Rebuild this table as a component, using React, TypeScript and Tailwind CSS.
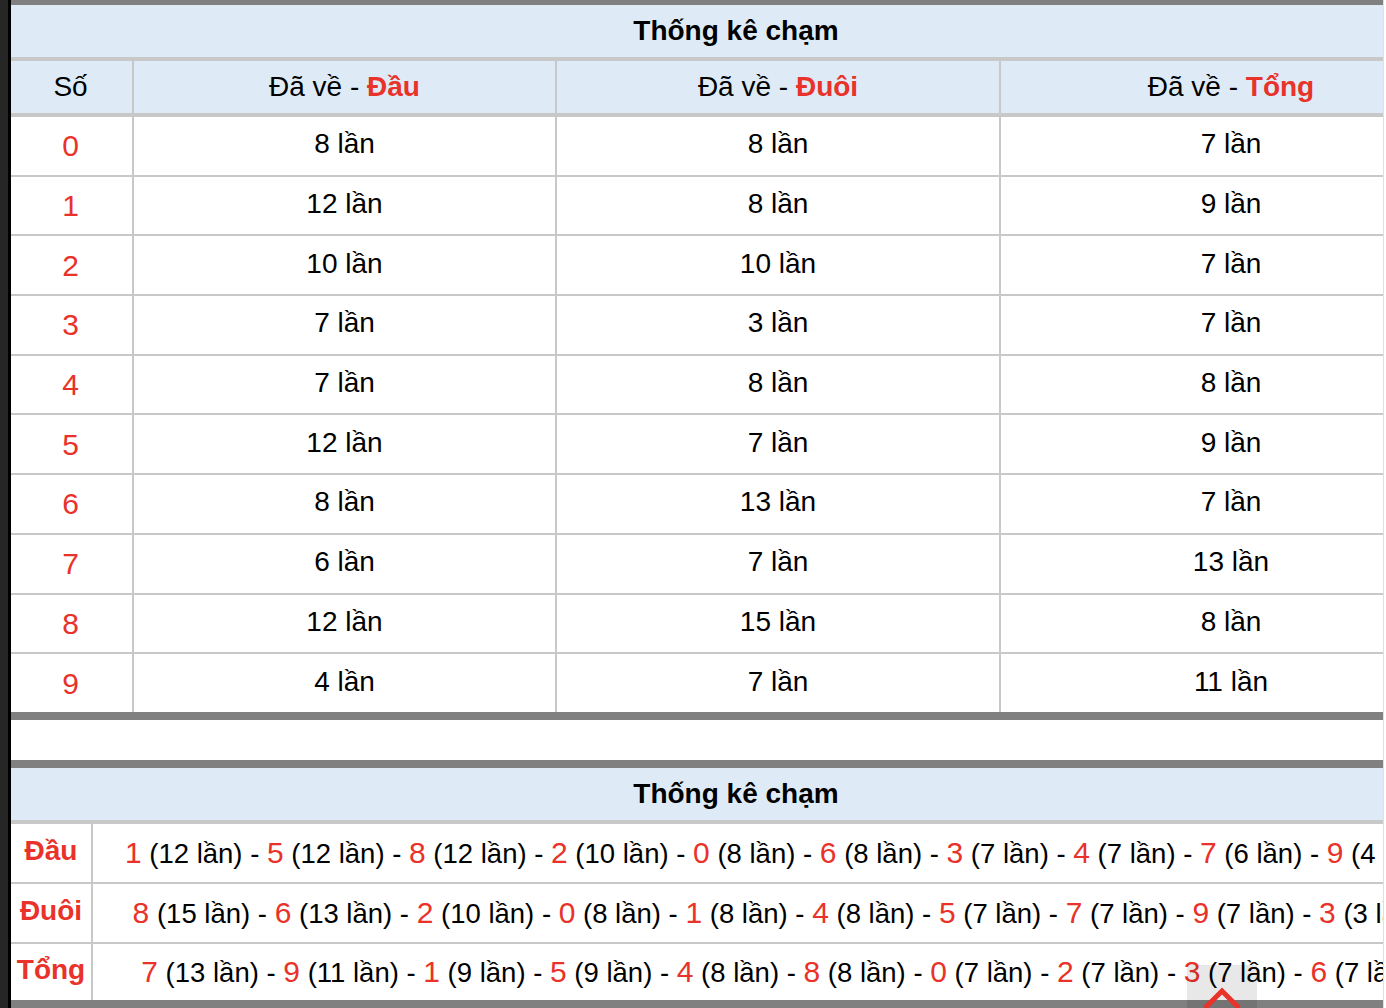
import React from "react";

const RED = "text-[#e8322a]";

const rows: [number, number, number, number][] = [
  [0, 8, 8, 7],
  [1, 12, 8, 9],
  [2, 10, 10, 7],
  [3, 7, 3, 7],
  [4, 7, 8, 8],
  [5, 12, 7, 9],
  [6, 8, 13, 7],
  [7, 6, 7, 13],
  [8, 12, 15, 8],
  [9, 4, 7, 11],
];

const summary: { label: string; items: [number, number][] }[] = [
  {
    label: "Đầu",
    items: [[1, 12], [5, 12], [8, 12], [2, 10], [0, 8], [6, 8], [3, 7], [4, 7], [7, 6], [9, 4]],
  },
  {
    label: "Đuôi",
    items: [[8, 15], [6, 13], [2, 10], [0, 8], [1, 8], [4, 8], [5, 7], [7, 7], [9, 7], [3, 3]],
  },
  {
    label: "Tổng",
    items: [[7, 13], [9, 11], [1, 9], [5, 9], [4, 8], [8, 8], [0, 7], [2, 7], [3, 7], [6, 7]],
  },
];

function Title() {
  return (
    <div className="h-[56px] bg-[#deebf7] border-b-[4px] border-[#c8c8c8] flex items-center justify-center font-bold text-[28px] text-black">
      Thống kê chạm
    </div>
  );
}

export default function App() {
  return (
    <div className="relative w-[1386px] h-[1008px] overflow-hidden flex bg-white font-['Liberation_Sans',Arial,Helvetica,sans-serif] text-black">
      <div className="w-[8px] h-full bg-[#262626] shrink-0" />
      <div className="w-[3px] h-full bg-black shrink-0" />
      <div className="w-[1372px] h-full overflow-hidden shrink-0">
        <div className="w-[1450px]">
          {/* Table 1 */}
          <div className="border-t-[5px] border-b-[8px] border-[#808080]">
            <Title />
            <div className="flex h-[56px] bg-[#deebf7] border-b-[4px] border-[#c8c8c8] text-[28px]">
              <div className="w-[123px] border-r-2 border-[#c8c8c8] flex items-center justify-center pr-[2px]">Số</div>
              <div className="w-[423px] border-r-2 border-[#c8c8c8] flex items-center justify-center">
                <span>
                  Đã về - <span className={`font-bold ${RED}`}>Đầu</span>
                </span>
              </div>
              <div className="w-[444px] border-r-2 border-[#c8c8c8] flex items-center justify-center">
                <span>
                  Đã về - <span className={`font-bold ${RED}`}>Đuôi</span>
                </span>
              </div>
              <div className="w-[460px] flex items-center justify-center">
                <span>
                  Đã về - <span className={`font-bold ${RED}`}>Tổng</span>
                </span>
              </div>
            </div>
            {rows.map((r, i) => (
              <div
                key={r[0]}
                className={`flex text-[28px] ${i < rows.length - 1 ? "h-[59.7px] border-b-2 border-[#c8c8c8]" : "h-[57.7px]"}`}
              >
                <div className={`w-[123px] border-r-2 border-[#c8c8c8] flex items-center justify-center pr-[2px] text-[30px] ${RED}`}>
                  {r[0]}
                </div>
                <div className="w-[423px] border-r-2 border-[#c8c8c8] flex items-center justify-center pb-[3px]">{r[1]} lần</div>
                <div className="w-[444px] border-r-2 border-[#c8c8c8] flex items-center justify-center pb-[3px]">{r[2]} lần</div>
                <div className="w-[460px] flex items-center justify-center pb-[3px]">{r[3]} lần</div>
              </div>
            ))}
          </div>

          <div className="h-[40px]" />

          {/* Table 2 */}
          <div className="border-t-[8px] border-b-[8px] border-[#808080]">
            <Title />
            {summary.map((s, i) => (
              <div
                key={s.label}
                className={`flex ${i < summary.length - 1 ? "h-[60px] border-b-2 border-[#c8c8c8]" : "h-[56px]"}`}
              >
                <div className={`w-[82px] border-r-2 border-[#c8c8c8] flex items-center justify-center font-bold text-[28px] pb-[4px] ${RED}`}>
                  {s.label}
                </div>
                <div className="w-[1368px] flex items-center justify-center whitespace-nowrap text-[27.5px]">
                  <span>
                    {s.items.map(([d, c], j) => (
                      <React.Fragment key={d}>
                        {j > 0 ? " - " : ""}
                        <span className={`text-[30px] ${RED}`}>{d}</span>
                        {` (${c} lần)`}
                      </React.Fragment>
                    ))}
                  </span>
                </div>
              </div>
            ))}
          </div>
        </div>
      </div>
      <div className="w-[3px] h-full bg-white border-l border-[#e0e0e0] shrink-0" />

      {/* scroll to top button */}
      <div className="absolute left-[1187px] top-[965px] w-[70px] h-[60px] bg-[rgba(0,0,0,0.09)]">
        <svg className="absolute left-[16px] top-[21px]" width="38" height="30" viewBox="0 0 38 30">
          <polyline points="2,22 19,5 36,22" fill="none" stroke="#e8322a" strokeWidth="5" />
        </svg>
      </div>
    </div>
  );
}
